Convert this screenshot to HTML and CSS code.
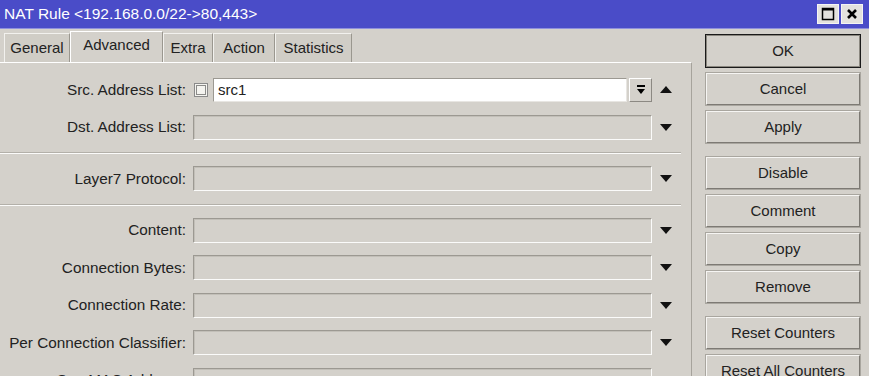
FILE: index.html
```html
<!DOCTYPE html>
<html lang="en">
<head>
    <meta charset="UTF-8">
    <title>NAT Rule</title>
    <link rel="stylesheet" href="styles.css">
</head>
<body>
<div class="window">
    <div class="titlebar">
        <span class="title">NAT Rule &lt;192.168.0.0/22-&gt;80,443&gt;</span>
        <div class="win-btns">
            <div class="win-btn"><svg width="14" height="14" viewBox="0 0 14 14"><rect x="1.5" y="1.5" width="11" height="11" fill="none" stroke="#000" stroke-width="1.5"/><rect x="1" y="1" width="12" height="2.5" fill="#000"/></svg></div>
            <div class="win-btn"><svg width="12" height="12" viewBox="0 0 12 12"><path d="M2 2 L10 10 M10 2 L2 10" stroke="#000" stroke-width="2.6"/></svg></div>
        </div>
    </div>
    <div class="main">
        <div class="left">
            <div class="tabs">
                <div class="tab t-general">General</div>
                <div class="tab active t-adv">Advanced</div>
                <div class="tab t-extra">Extra</div>
                <div class="tab t-action">Action</div>
                <div class="tab t-stats">Statistics</div>
            </div>
            <div class="panel">
                <div class="row first">
                    <div class="label">Src. Address List:</div>
                    <div class="check"><svg width="14" height="14" viewBox="0 0 14 14"><rect x="0.5" y="0.5" width="13" height="13" fill="#f4f3ef" stroke="#8a8a8a"/><rect x="2.5" y="2.5" width="9" height="9" fill="none" stroke="#222" stroke-dasharray="1 1"/></svg></div>
                    <div class="input">src1</div>
                    <div class="drop-btn"><svg width="12" height="12" viewBox="0 0 12 12"><rect x="2" y="1" width="8" height="2" fill="#000"/><path d="M2 5 L10 5 L6 10 Z" fill="#000"/></svg></div>
                    <div class="arrow up"></div>
                </div>
                <div class="row">
                    <div class="label">Dst. Address List:</div>
                    <div class="field"></div>
                    <div class="arrow"></div>
                </div>
                <div class="sep"></div>
                <div class="row">
                    <div class="label">Layer7 Protocol:</div>
                    <div class="field"></div>
                    <div class="arrow"></div>
                </div>
                <div class="sep"></div>
                <div class="row">
                    <div class="label">Content:</div>
                    <div class="field"></div>
                    <div class="arrow"></div>
                </div>
                <div class="row">
                    <div class="label">Connection Bytes:</div>
                    <div class="field"></div>
                    <div class="arrow"></div>
                </div>
                <div class="row">
                    <div class="label">Connection Rate:</div>
                    <div class="field"></div>
                    <div class="arrow"></div>
                </div>
                <div class="row">
                    <div class="label">Per Connection Classifier:</div>
                    <div class="field"></div>
                    <div class="arrow"></div>
                </div>
                <div class="row">
                    <div class="label">Src. MAC Address:</div>
                    <div class="field"></div>
                    <div class="arrow"></div>
                </div>
            </div>
        </div>
        <div class="buttons">
            <div class="btn default">OK</div>
            <div class="btn">Cancel</div>
            <div class="btn">Apply</div>
            <div class="btn group">Disable</div>
            <div class="btn">Comment</div>
            <div class="btn">Copy</div>
            <div class="btn">Remove</div>
            <div class="btn group">Reset Counters</div>
            <div class="btn">Reset All Counters</div>
        </div>
    </div>
</div>
</body>
</html>
```

FILE: styles.css
```css
*{
    margin: 0;
    padding: 0;
    box-sizing: border-box;
}
body{
    width: 869px;
    height: 376px;
    overflow: hidden;
    background: #d4d1cb;
    font-family: "Liberation Sans", Arial, sans-serif;
    font-size: 15px;
    color: #222;
}
.titlebar{
    height: 29px;
    background: #4a4cc8;
    border-bottom: 1px solid #8f90dc;
    display: flex;
    align-items: center;
    justify-content: space-between;
    padding: 0 6px 0 4px;
}
.title{
    color: #fff;
    font-size: 15.5px;
}
.win-btns{
    display: flex;
    gap: 2px;
}
.win-btn{
    width: 22px;
    height: 20px;
    background: #e4e2de;
    border: 1px solid #f4f4f4;
    display: flex;
    align-items: center;
    justify-content: center;
}
.main{
    display: flex;
}
.left{
    width: 692px;
}
.tabs{
    display: flex;
    align-items: flex-end;
    height: 33px;
    padding-left: 4px;
}
.tab{
    height: 29px;
    line-height: 27px;
    text-align: center;
    background: #d0cdc6;
    border-top: 1px solid #f2f1ee;
    border-left: 1px solid #f2f1ee;
    border-right: 1px solid #9a978f;
}
.tab.active{
    height: 31px;
    line-height: 25px;
    background: #d4d1cb;
    border-top: 1px solid #fff;
    border-left: 1px solid #fff;
}
.t-general{ width: 66px; }
.t-adv{ width: 93px; }
.t-extra{ width: 50px; }
.t-action{ width: 62px; }
.t-stats{ width: 77px; }
.panel{
    border-top: 1px solid #fff;
    border-right: 1px solid #a6a39c;
    height: 320px;
    padding-top: 14px;
}
.row{
    display: flex;
    align-items: center;
    height: 25px;
    margin-bottom: 12.5px;
}
.label{
    width: 186px;
    text-align: right;
    white-space: nowrap;
    font-size: 15.3px;
}
.field{
    width: 459px;
    height: 25px;
    margin-left: 7px;
    border: 1px solid;
    border-color: #9c9992 #fbfbfa #fbfbfa #9c9992;
    box-shadow: inset 1px 1px 0 #c2bfb8;
}
.check{
    width: 14px;
    height: 14px;
    margin-left: 8px;
    display: flex;
}
.input{
    width: 414px;
    height: 24px;
    margin-left: 5px;
    background: #fff;
    border: 1px solid;
    border-color: #9c9992 #e8e6e2 #e8e6e2 #9c9992;
    padding-left: 4px;
    line-height: 22px;
}
.drop-btn{
    width: 23px;
    height: 24px;
    margin-left: 2px;
    border: 1px solid;
    border-color: #fff #8c8983 #8c8983 #fff;
    display: flex;
    align-items: center;
    justify-content: center;
}
.arrow{
    width: 0;
    height: 0;
    margin-left: 8px;
    border-left: 6px solid transparent;
    border-right: 6px solid transparent;
    border-top: 7px solid #111;
}
.arrow.up{
    border-top: 0;
    border-bottom: 7px solid #111;
}
.sep{
    height: 2px;
    border-top: 1px solid #b3b0a9;
    border-bottom: 1px solid #fbfbfa;
    margin: 0 10px 12px 0;
}
.buttons{
    width: 154px;
    margin-left: 14px;
    padding-top: 6px;
    display: flex;
    flex-direction: column;
    gap: 6px;
}
.btn{
    height: 32px;
    line-height: 29px;
    text-align: center;
    border: 1px solid;
    border-color: #f6f5f3 #7d7a74 #7d7a74 #f6f5f3;
    box-shadow: 0 0 0 1px #a9a69f;
    flex-shrink: 0;
}
.btn.default{
    border: 1px solid #8a877f;
    box-shadow: 0 0 0 1px #1a1a1a;
}
.btn.group{
    margin-top: 8px;
}
```
